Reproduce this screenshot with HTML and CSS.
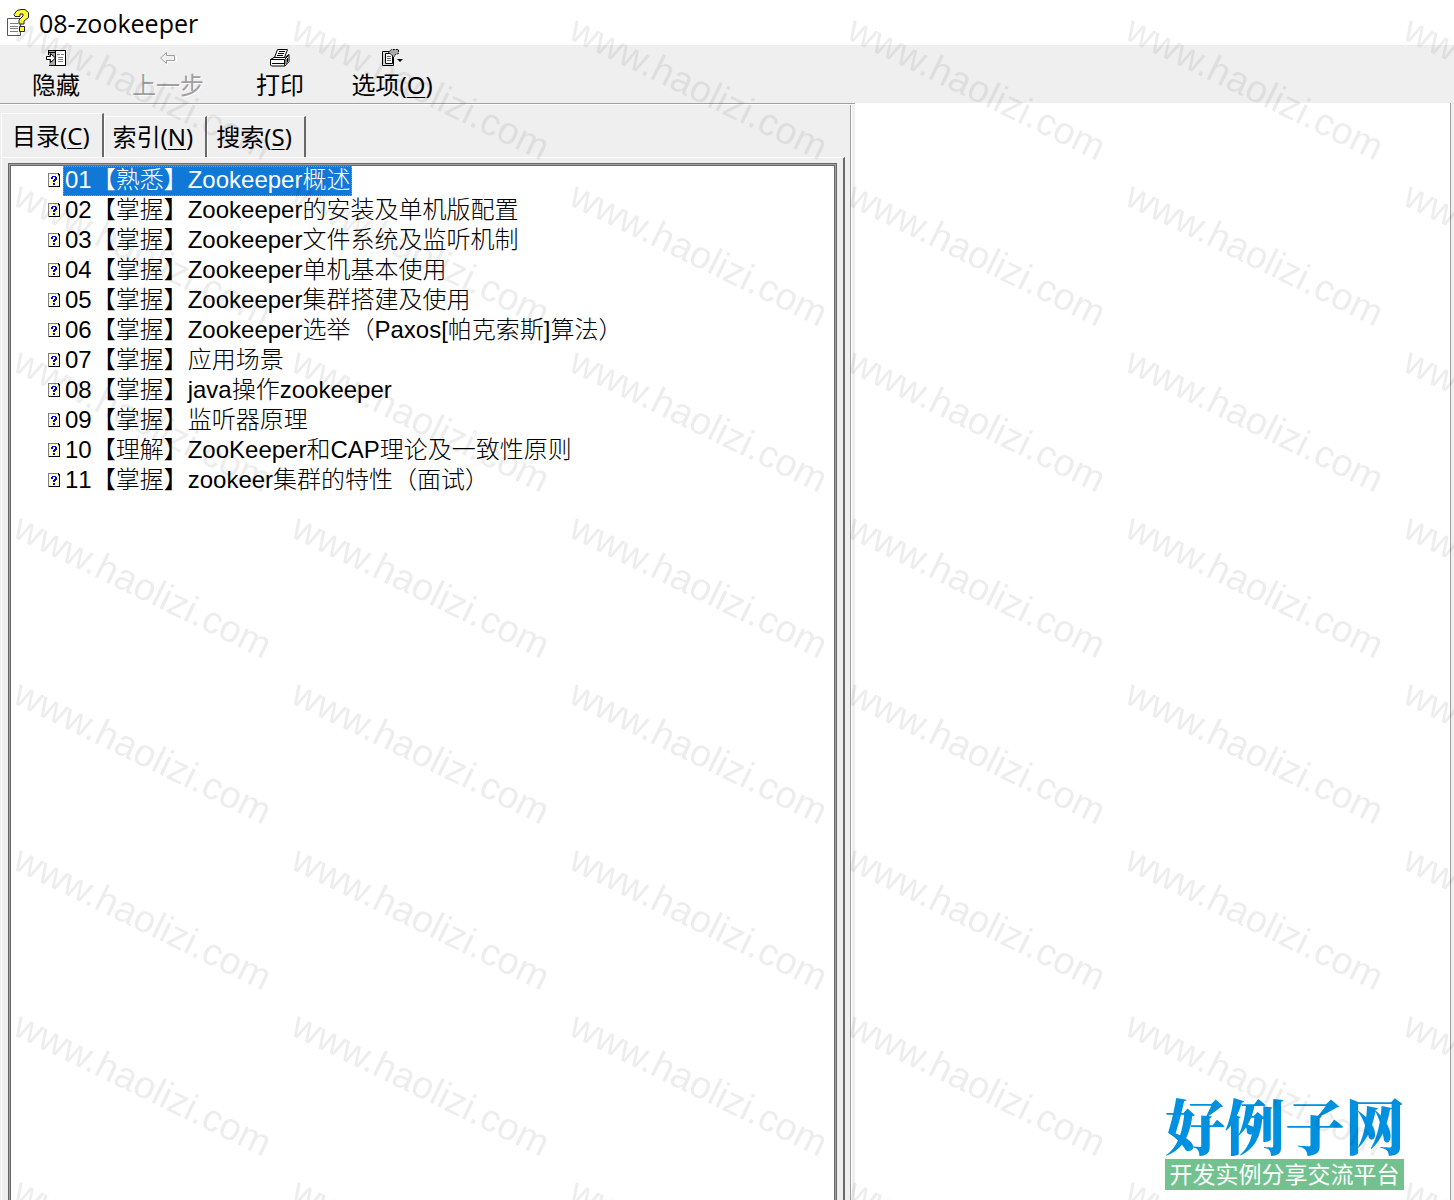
FILE: index.html
```html
<!DOCTYPE html>
<html lang="zh-CN">
<head>
<meta charset="utf-8">
<title>08-zookeeper</title>
<link rel="stylesheet" href="styles.css">
</head>
<body>
<svg class="defs" aria-hidden="true">
  <symbol id="topic" viewBox="0 0 12 14">
    <path d="M0 0h10v1h2v13H0z" fill="#808080"/>
    <path d="M10 0h1v1h1v13H1v-1h10V2h-1z" fill="#000"/>
    <path d="M1 1h9v2h1v10H1z" fill="#ffffd0"/>
    <path d="M1 2h1v1H1zM1 5h1v1H1zM1 8h1v1H1zM1 11h1v1H1zM9 3h1v1H9zM9 9h1v1H9zM3 1h1v1H3zM7 1h1v1H7zM9 12h1v1H9z" fill="#ff0"/>
    <path d="M4 3h4v1H4zM3 4h2v2H3zM7 4h2v3H7zM6 6h2v2H6zM5 7h2v2H5zM5 10h2v2H5z" fill="#0000d8"/>
  </symbol>
</svg>
<header class="titlebar">
  <svg class="app-icon" viewBox="0 0 24 28" aria-hidden="true">
    <path d="M.5 9.500h13v17H.5z" fill="#fff" stroke="#555"/>
    <path d="M3 14.500h8M3 17.500h8M3 19.500h8M3 22.500h8" stroke="#808080"/>
    <path d="M7 5.500 10 1.500 14 .5h4l3.500 3v5L17 12v3h-5v-4l4-4V5h-3v2.500H8z" fill="#ff3" stroke="#222"/>
    <path d="M12.500 17.500h5v5h-5z" fill="#ff3" stroke="#222"/>
  </svg>
  <h1>08-zookeeper</h1>
</header>
<div class="toolbar" role="toolbar">
  <button type="button">
    <svg width="20" height="18" viewBox="0 0 20 18" aria-hidden="true">
      <path d="M2.500 1h17v16h-17z" fill="#fff"/><path d="M3 2h6v15H3z" fill="#aaa"/>
      <path d="M2 1.500h18M19.500 1v16M3 16.500h17M9.500 2v15M2.500 1v5M3 3.500h6" fill="none" stroke="#000"/>
      <path d="M11 5.500h3M12 8.500h5M12 10.500h5M12 12.500h5M15 5.500h3" stroke="#808080"/>
      <path d="M.5 7.500h4v-3l5 4.500-5 4.500v-3h-4z" fill="#fff" stroke="#000"/>
    </svg>
    <span>隐藏</span>
  </button>
  <button type="button" disabled>
    <svg width="20" height="18" viewBox="0 0 20 18" aria-hidden="true">
      <path d="M3.500 9.500 9.500 4.500v3h9v5h-9v3z" fill="none" stroke="#fff"/>
      <path d="M2.500 9 8.500 3.500v3h8v5h-8v3z" fill="#efefef" stroke="#a0a0a0"/>
    </svg>
    <span>上一步</span>
  </button>
  <button type="button">
    <svg width="20" height="18" viewBox="0 0 20 18" aria-hidden="true">
      <path d="M4.500 8.500 7.500.5h10l-3 8" fill="#fff" stroke="#000"/>
      <path d="M9 2.500h6M8 4.500h6M7 6.500h6" stroke="#000"/>
      <path d="M.5 10.500 4 8.500h11l4-3v7l-4 4.500H1.500l-1-1z" fill="#fff" stroke="#000"/>
      <path d="M.5 10.500h14v6M14.500 10.500l4-4M2 14.500h12M16 10v5M17.500 9v4" fill="none" stroke="#000"/>
    </svg>
    <span>打印</span>
  </button>
  <button type="button">
    <svg width="20" height="18" viewBox="0 0 20 18" aria-hidden="true">
      <path d="M.5 2.500h11v14H.5z" fill="#ddd" stroke="#000"/>
      <path d="M3.500 4.500h7v10h-7z" fill="#fff" stroke="#000"/>
      <path d="M5 7.500h4M5 9.500h4M5 11.500h4" stroke="#666"/>
      <path d="M6 3.500 9.500.5h7v4l-3 1-2 3-2-3z" fill="#aaa" stroke="#000" stroke-dasharray="2 1"/>
      <path d="M15 10h6l-3 3z"/>
    </svg>
    <span>选项(<u>O</u>)</span>
  </button>
</div>
<main class="workspace">
  <section class="navigation">
    <div class="tabs" role="tablist">
      <button type="button" role="tab" aria-selected="true">目录(<u>C</u>)</button>
      <button type="button" role="tab" aria-selected="false">索引(<u>N</u>)</button>
      <button type="button" role="tab" aria-selected="false">搜索(<u>S</u>)</button>
    </div>
    <div class="tab-page" role="tabpanel">
      <ul class="tree">
        <li><svg aria-hidden="true"><use href="#topic"/></svg><a class="selected" href="#t01">01【熟悉】Zookeeper概述</a></li>
        <li><svg aria-hidden="true"><use href="#topic"/></svg><a href="#t02">02【掌握】Zookeeper的安装及单机版配置</a></li>
        <li><svg aria-hidden="true"><use href="#topic"/></svg><a href="#t03">03【掌握】Zookeeper文件系统及监听机制</a></li>
        <li><svg aria-hidden="true"><use href="#topic"/></svg><a href="#t04">04【掌握】Zookeeper单机基本使用</a></li>
        <li><svg aria-hidden="true"><use href="#topic"/></svg><a href="#t05">05【掌握】Zookeeper集群搭建及使用</a></li>
        <li><svg aria-hidden="true"><use href="#topic"/></svg><a href="#t06">06【掌握】Zookeeper选举（Paxos[帕克索斯]算法）</a></li>
        <li><svg aria-hidden="true"><use href="#topic"/></svg><a href="#t07">07【掌握】应用场景</a></li>
        <li><svg aria-hidden="true"><use href="#topic"/></svg><a href="#t08">08【掌握】java操作zookeeper</a></li>
        <li><svg aria-hidden="true"><use href="#topic"/></svg><a href="#t09">09【掌握】监听器原理</a></li>
        <li><svg aria-hidden="true"><use href="#topic"/></svg><a href="#t10">10【理解】ZooKeeper和CAP理论及一致性原则</a></li>
        <li><svg aria-hidden="true"><use href="#topic"/></svg><a href="#t11">11【掌握】zookeer集群的特性（面试）</a></li>
      </ul>
    </div>
  </section>
  <article class="content"></article>
</main>
<aside class="brand">
  <strong>好例子网</strong>
  <span>开发实例分享交流平台</span>
</aside>
<svg class="watermark" aria-hidden="true">
  <defs>
    <pattern id="mark" x="10" y="10" width="278" height="166" patternUnits="userSpaceOnUse">
      <text transform="translate(1 28) rotate(26)">www.haolizi.com</text>
    </pattern>
  </defs>
  <rect width="100%" height="100%" fill="url(#mark)"/>
</svg>
</body>
</html>
```

FILE: styles.css
```css
* { box-sizing: border-box; }

body {
  margin: 0;
  height: 100vh;
  display: flex;
  flex-direction: column;
  overflow: hidden;
  background: #fff;
  color: #000;
  font: 24px/32px "Noto Sans", "Noto Sans CJK SC", sans-serif;
}

button {
  margin: 0;
  padding: 0;
  border: 0;
  background: none;
  color: inherit;
  font: inherit;
}

u {
  text-decoration-thickness: 1px;
  text-underline-offset: 3px;
}

.defs { display: none; }

.titlebar {
  display: flex;
  align-items: center;
  gap: 8px;
  height: 45px;
  padding: 0 7px;
}

.titlebar h1 {
  margin: 0;
  font: 25px/32px "Open Sans", "Noto Sans", sans-serif;
}

.app-icon { width: 24px; height: 28px; }

.toolbar {
  display: flex;
  flex: none;
  height: 58px;
  background: #efefef;
}

.toolbar button {
  display: flex;
  flex-direction: column;
  align-items: center;
  width: 112px;
  padding-top: 4px;
  line-height: 36px;
}

.toolbar button:disabled {
  color: #a0a0a0;
  text-shadow: 1px 1px #fff;
}

.toolbar svg { flex: none; overflow: visible; }

.workspace {
  display: grid;
  grid-template-columns: 855fr 599fr;
  flex: 1;
  min-height: 0;
}

.navigation {
  display: flex;
  flex-direction: column;
  min-width: 0;
  min-height: 0;
  padding-right: 6px;
  overflow: hidden;
  border-top: 1px solid #a0a0a0;
  background: #efefef;
  box-shadow: inset 0 1px #fff, inset -3px 0 #efefef, inset -4px 0 #fff, inset -5px 0 #a0a0a0;
}

.tabs {
  display: flex;
  flex: none;
  align-items: flex-end;
  height: 53px;
  padding-left: 1px;
}

.tabs button {
  height: 41px;
  padding: 0 12px 0 8px;
  border: solid #fff;
  border-width: 1px 2px 0 1px;
  border-right-color: #696969;
  line-height: 40px;
}

.tabs [aria-selected="true"] {
  height: 44px;
  padding-left: 10px;
}

.tab-page {
  flex: 1;
  min-height: 0;
  margin-left: 1px;
  margin-right: 4px;
  margin-bottom: -4px;
  padding: 5px 6px 0;
  border: solid #fff;
  border-width: 1px 2px 0 1px;
  border-right-color: #696969;
}

.tree {
  height: 100%;
  margin: 0;
  padding: 2px 2px 0 39px;
  border: 1px solid #696969;
  background: #fff;
  box-shadow: inset 0 0 0 1px #a0a0a0, inset 0 0 0 2px #696969;
  list-style: none;
  font: 24px/28px "Liberation Sans", "Noto Sans CJK SC", sans-serif;
  font-weight: 300;
  font-kerning: none;
}

.tree li {
  display: flex;
  align-items: flex-start;
  gap: 3px;
  height: 30px;
}

.tree svg {
  width: 12px;
  height: 14px;
  margin-top: 7px;
}

.tree a {
  height: 30px;
  padding: 0 2px;
  color: #000;
  text-decoration: none;
  white-space: nowrap;
}

.tree .selected {
  background: #1078d7;
  color: #fff;
  outline: 1px dotted #ef8728;
  outline-offset: -1px;
}

.content {
  margin-right: 3px;
  border-right: 1px solid #a0a0a0;
  box-shadow: 3px 0 #efefef;
}

.brand {
  position: absolute;
  right: 50px;
  bottom: 10px;
  display: flex;
  flex-direction: column;
  gap: 3px;
  width: 239px;
}

.brand strong {
  color: #0090e0;
  font: 900 60px/64px "Noto Serif CJK SC", "Noto Sans CJK SC", serif;
  white-space: nowrap;
}

.brand span {
  padding-bottom: 3px;
  background: #72c290;
  color: #fff;
  font: 23px/28px "Noto Sans CJK SC", sans-serif;
  text-align: center;
  white-space: nowrap;
}

.watermark {
  position: absolute;
  inset: 0;
  width: 100%;
  height: 100%;
  pointer-events: none;
}

.watermark text {
  fill: #000;
  fill-opacity: .07;
  font: 38px "Liberation Sans", sans-serif;
}
```
